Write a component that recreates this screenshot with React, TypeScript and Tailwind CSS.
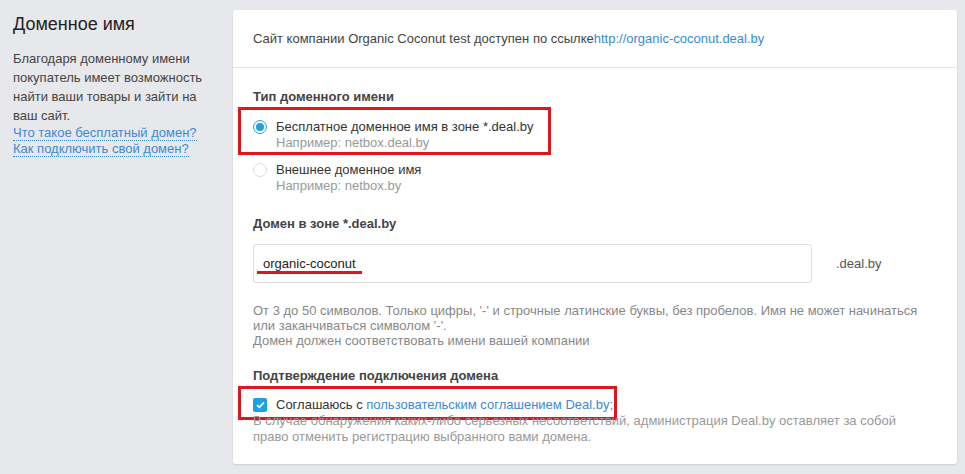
import React from "react";

export default function App() {
  const font = { fontFamily: '"Liberation Sans", Arial, sans-serif' };
  return (
    <div className="w-[965px] h-[474px] bg-[#e7e8eb] flex overflow-hidden text-[#333]" style={font}>
      <div className="w-[233px] shrink-0 pl-[13px] pr-4 pt-[12px]">
        <h1 className="text-[18px] leading-[24px] text-[#222]">Доменное имя</h1>
        <p className="mt-[13px] text-[13px] leading-[19px] text-[#444]">
          Благодаря доменному имени покупатель имеет возможность найти ваши товары и зайти на ваш сайт.
        </p>
        <div className="text-[13px] leading-[16px] text-[#3a8ad6]">
          <div><span className="border-b border-dotted border-[#3a8ad6]">Что такое бесплатный домен?</span></div>
          <div><span className="border-b border-dotted border-[#3a8ad6]">Как подключить свой домен?</span></div>
        </div>
      </div>
      <div className="mt-[10px] w-[724px] h-[454px] bg-white rounded-[3px] shadow-[0_1px_2px_rgba(0,0,0,0.12)] flex flex-col">
        <div className="h-[58px] border-b border-[#e3e4e7] px-5 flex items-center text-[13px] text-[#444]">
          <span>Сайт компании Organic Coconut test доступен по ссылке</span>
          <span className="text-[#3a8ad6]">http://organic-coconut.deal.by</span>
        </div>
        <div className="px-5 pt-[20px] text-[13px]">
          <div className="font-bold text-[#444] leading-[18px]">Тип доменного имени</div>
          <div className="mt-[1px] -ml-[15px] w-[313px] border-[3px] border-[#e0161f] pl-3 pt-[9px] pb-[1px] flex gap-[9px]">
            <div className="mt-[1px] w-[14px] h-[14px] rounded-full border border-[#1ea1e0] flex items-center justify-center">
              <div className="w-[8px] h-[8px] rounded-full bg-[#1ea1e0]" />
            </div>
            <div className="leading-[16px]">
              <div className="text-[#333]">Бесплатное доменное имя в зоне *.deal.by</div>
              <div className="text-[#999]">Например: netbox.deal.by</div>
            </div>
          </div>
          <div className="mt-[7px] flex gap-[9px]">
            <div className="mt-[1px] w-[14px] h-[14px] rounded-full border border-[#ddd]" />
            <div className="leading-[16px]">
              <div className="text-[#333]">Внешнее доменное имя</div>
              <div className="text-[#999]">Например: netbox.by</div>
            </div>
          </div>
          <div className="mt-[21px] font-bold text-[#444] leading-[18px]">Домен в зоне *.deal.by</div>
          <div className="mt-[11px] flex items-center">
            <div className="w-[559px] h-[39px] border border-[#ddd] rounded-[3px] flex items-center pl-[7px]">
              <span className="text-[13px] text-[#222] border-b-[3px] border-[#e0161f] px-[6px] -ml-[4px] mt-[3px] leading-[15px]">organic-coconut</span>
            </div>
            <span className="ml-[24px] text-[#555]">.deal.by</span>
          </div>
          <div className="mt-[20px] text-[13px] leading-[15px] text-[#888] w-[672px]">
            От 3 до 50 символов. Только цифры, '-' и строчные латинские буквы, без пробелов. Имя не может начинаться или заканчиваться символом '-'.
            <br />
            Домен должен соответствовать имени вашей компании
          </div>
          <div className="mt-[19px] font-bold text-[#444] leading-[18px]">Подтверждение подключения домена</div>
          <div className="mt-[1px] -ml-[15px] w-[379px] h-[34px] border-[3px] border-[#e0161f] pl-3 pt-[4px] flex items-center gap-[9px]">
            <div className="w-[14px] h-[14px] rounded-[2px] bg-[#1ea1e0] flex items-center justify-center">
              <svg width="9" height="8" viewBox="0 0 9 8"><path d="M1 4.2 L3.4 6.4 L8 1.4" stroke="white" strokeWidth="1.6" fill="none" /></svg>
            </div>
            <span className="text-[#333]">Соглашаюсь с <span className="text-[#3a8ad6]">пользовательским соглашением Deal.by;</span></span>
          </div>
          <div className="-mt-[7px] text-[13px] leading-[16px] text-[#999] w-[680px]">
            В случае обнаружения каких-либо серьезных несоответствий, администрация Deal.by оставляет за собой право отменить регистрацию выбранного вами домена.
          </div>
        </div>
      </div>
    </div>
  );
}
